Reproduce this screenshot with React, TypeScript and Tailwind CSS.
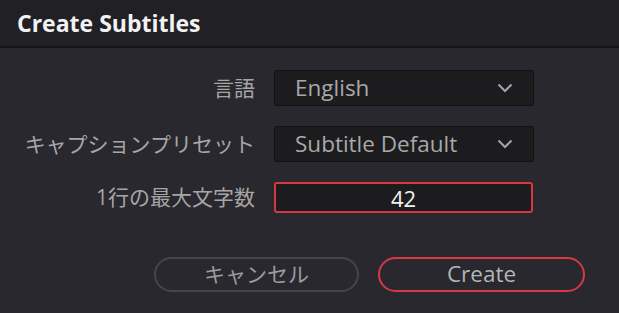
const font = { fontFamily: '"Open Sans", "Noto Sans CJK JP", sans-serif' };

function Chevron() {
  return (
    <svg width="16" height="10" viewBox="0 0 16 10" className="text-[#a3a3a3]">
      <path d="M1.5 1.5 L8 8 L14.5 1.5" fill="none" stroke="currentColor" strokeWidth="2" />
    </svg>
  );
}

function Select({ value }: { value: string }) {
  return (
    <div className="flex h-[36px] w-[260px] items-center justify-between rounded-[3px] border border-[#101012] bg-[#1c1c1e] pl-[20px] pr-[20px]">
      <span className="text-[22.5px] leading-none text-[#a8a8a8]">{value}</span>
      <Chevron />
    </div>
  );
}

export default function App() {
  return (
    <div className="h-[313px] w-[619px] overflow-hidden bg-[#28282e]" style={font}>
      <div className="flex h-[48px] items-center border-b-2 border-[#141417] bg-[#202025] px-[17px]">
        <h1 className="text-[23px] font-bold text-[#f2f2f2]">Create Subtitles</h1>
      </div>
      <div className="grid grid-cols-[255px_260px] items-center gap-x-[19px] gap-y-[20px] pt-[22px]">
        <span className="text-right text-[21px] leading-none text-[#a6a6a6]">言語</span>
        <Select value="English" />
        <span className="text-right text-[21px] leading-none text-[#a6a6a6]">キャプションプリセット</span>
        <Select value="Subtitle Default" />
        <span className="text-right text-[21px] leading-none text-[#a6a6a6]">1行の最大文字数</span>
        <div className="flex h-[31px] w-[259px] items-center justify-center rounded-[3px] border-2 border-[#d8383f] bg-[#1c1c1e]">
          <span className="text-[22px] leading-none text-[#f0f0f0]">42</span>
        </div>
      </div>
      <div className="mt-[44px] flex gap-[19px] pl-[154px]">
        <button className="flex h-[35px] w-[205px] items-center justify-center rounded-full border-2 border-[#45454d] text-[21px] leading-none text-[#9c9c9c]">
          キャンセル
        </button>
        <button className="flex h-[35px] w-[207px] items-center justify-center rounded-full border-2 border-[#d8383f] text-[22.5px] leading-none text-[#b5b5b5]">
          Create
        </button>
      </div>
    </div>
  );
}
